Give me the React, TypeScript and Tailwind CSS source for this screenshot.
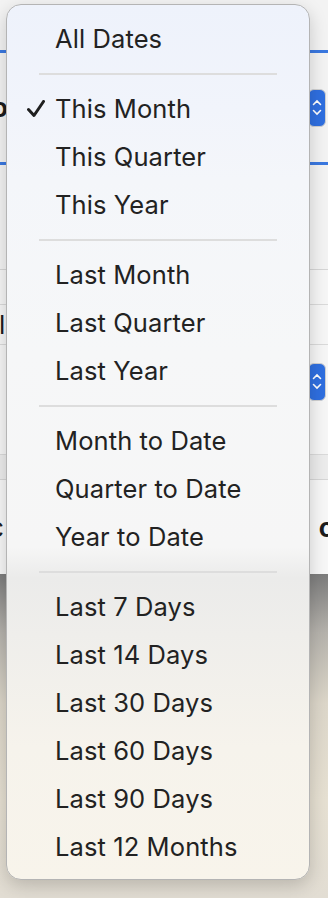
import React from "react"

type Entry = { label: string; checked?: boolean } | "sep"

const entries: Entry[] = [
  { label: "All Dates" },
  "sep",
  { label: "This Month", checked: true },
  { label: "This Quarter" },
  { label: "This Year" },
  "sep",
  { label: "Last Month" },
  { label: "Last Quarter" },
  { label: "Last Year" },
  "sep",
  { label: "Month to Date" },
  { label: "Quarter to Date" },
  { label: "Year to Date" },
  "sep",
  { label: "Last 7 Days" },
  { label: "Last 14 Days" },
  { label: "Last 30 Days" },
  { label: "Last 60 Days" },
  { label: "Last 90 Days" },
  { label: "Last 12 Months" },
]

function Stepper() {
  return (
    <div className="w-[18px] h-[38px] rounded-[6px] bg-[#2f6fe0] border border-[#d0d0d0] flex flex-col items-center justify-center gap-[3px]">
      <svg width="10" height="7" viewBox="0 0 10 7">
        <path d="M1.5 5.5 L5 2 L8.5 5.5" stroke="#fff" strokeWidth="1.6" fill="none" strokeLinecap="round" />
      </svg>
      <svg width="10" height="7" viewBox="0 0 10 7">
        <path d="M1.5 1.5 L5 5 L8.5 1.5" stroke="#fff" strokeWidth="1.6" fill="none" strokeLinecap="round" />
      </svg>
    </div>
  )
}

function Backdrop() {
  return (
    <div className="flex flex-col w-[328px] h-[898px] overflow-hidden">
      {/* window behind the menu */}
      <div className="bg-[#f3f3f3] h-[270px] pt-[50px] border-b border-[#d6d6d6]">
        <div className="h-[115px] border-y-[3px] border-[#3a78e0] flex items-center justify-between pr-[2px]">
          <span className="-ml-[8px] text-[26px] font-bold text-[#1c1c1c]">o</span>
          <Stepper />
        </div>
      </div>
      <div className="bg-[#f6f6f6] h-[35px] border-b border-[#dadada]" />
      <div className="bg-[#f6f6f6] h-[40px] flex items-center border-b border-[#dadada]">
        <span className="-ml-[1px] text-[26px] text-[#1c1c1c]">l</span>
      </div>
      <div className="bg-[#f6f6f6] h-[110px] flex items-center justify-between pr-[2px] border-b border-[#dadada]">
        <span className="-ml-[10px] text-[26px] text-[#1c1c1c]">r</span>
        <div className="mb-[36px]">
          <Stepper />
        </div>
      </div>
      <div className="bg-[#ececec] h-[25px] border-b border-[#d6d6d6]" />
      <div className="bg-[#f7f7f7] h-[94px] flex items-center justify-between">
        <span className="-ml-[11px] text-[26px] text-[#1c1c1c]">c</span>
        <span className="-mr-[6px] text-[26px] font-bold text-[#1c1c1c]">c</span>
      </div>
      <div className="flex-1 bg-[linear-gradient(180deg,#7c7c7c_0%,#b5b2ac_18%,#dcd6c9_40%,#e6e0d2_70%,#e2ddd3_100%)]" />
    </div>
  )
}

export default function App() {
  return (
    <div className="relative w-[328px] h-[898px] overflow-hidden font-['Inter',sans-serif]">
      <Backdrop />
      <div className="absolute left-[6px] top-[4px] w-[304px] rounded-[15px] border border-[#b4b4b4] shadow-[0_6px_18px_rgba(0,0,0,0.18)] overflow-hidden bg-[linear-gradient(180deg,#eef2fb_0%,#f1f4fb_12%,#f4f6fa_20%,#f6f7f8_40%,#f6f6f6_62%,#ebebea_65.5%,#efeeeb_72%,#f6f3ec_85%,#f8f4eb_100%)] pt-[10px] pb-[8px]">
        {entries.map((e, i) =>
          e === "sep" ? (
            <div key={i} className="h-[22px] flex items-center">
              <div className="mx-[32px] w-full h-[2px] bg-[#dddddd]" />
            </div>
          ) : (
            <div key={i} className="h-[48px] flex items-center pl-[20px]">
              <div className="w-[29px] flex items-center">
                {e.checked && (
                  <svg width="18" height="18" viewBox="0 0 18 18">
                    <path d="M1.5 9.5 L7 15.5 L16.5 1.5" stroke="#1f1f1f" strokeWidth="3" fill="none" strokeLinecap="round" strokeLinejoin="round" />
                  </svg>
                )}
              </div>
              <span className="-ml-[1px] text-[25.5px] leading-none text-[#222222] tracking-[0.1px]">{e.label}</span>
            </div>
          )
        )}
      </div>
    </div>
  )
}
